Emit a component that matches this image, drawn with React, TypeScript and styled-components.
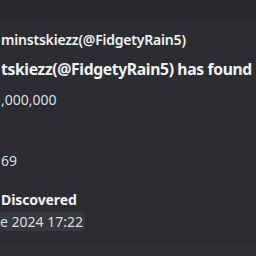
import React from 'react';
import styled, { createGlobalStyle } from 'styled-components';

const GlobalStyle = createGlobalStyle`
  html, body {
    margin: 0;
    padding: 0;
    background: #2b2d31;
  }
  body {
    font-family: 'Noto Sans', 'Open Sans', sans-serif;
  }
`;

const PageStyled = styled.div`
  width: 256px;
  height: 256px;
  display: flex;
  flex-direction: column;
  background: #2b2d31;
  overflow: hidden;
`;

const TopBandStyled = styled.div`
  height: 21px;
  flex-shrink: 0;
  background: #26282c;
`;

const EmbedStyled = styled.div`
  flex: 1;
  display: flex;
  flex-direction: column;
  padding-left: 1px;
  white-space: nowrap;
`;

const BottomBandStyled = styled.div`
  height: 10px;
  flex-shrink: 0;
  background: #2e3035;
`;

const AuthorStyled = styled.div`
  margin-top: 10px;
  font-size: 14px;
  line-height: 18px;
  font-weight: 600;
  letter-spacing: -0.2px;
  color: #f2f3f5;
`;

const TitleStyled = styled.div`
  margin-top: 9px;
  font-size: 15.7px;
  line-height: 22px;
  font-weight: 700;
  letter-spacing: -0.35px;
  color: #f2f3f5;
`;

const ValueStyled = styled.div<{ $gap: number }>`
  margin-top: ${({ $gap }) => $gap}px;
  font-size: 14px;
  line-height: 18px;
  font-weight: 400;
  color: #dbdee1;
`;

const FieldNameStyled = styled.div`
  margin-top: 21px;
  font-size: 14px;
  line-height: 18px;
  font-weight: 700;
  letter-spacing: -0.1px;
  color: #f2f3f5;
`;

const TimestampStyled = styled.span`
  align-self: flex-start;
  margin-top: 3px;
  margin-left: -1px;
  padding: 0 2px 0 0;
  border-radius: 3px;
  font-size: 14px;
  line-height: 19px;
  color: #dbdee1;
  background: rgba(255, 255, 255, 0.06);
`;

const App: React.FC = () => (
  <>
    <GlobalStyle />
    <PageStyled>
      <TopBandStyled />
      <EmbedStyled>
        <AuthorStyled>minstskiezz(@FidgetyRain5)</AuthorStyled>
        <TitleStyled>tskiezz(@FidgetyRain5) has found</TitleStyled>
        <ValueStyled $gap={11}>,000,000</ValueStyled>
        <ValueStyled $gap={43}>69</ValueStyled>
        <FieldNameStyled>Discovered</FieldNameStyled>
        <TimestampStyled>e 2024 17:22</TimestampStyled>
      </EmbedStyled>
      <BottomBandStyled />
    </PageStyled>
  </>
);

export default App;
